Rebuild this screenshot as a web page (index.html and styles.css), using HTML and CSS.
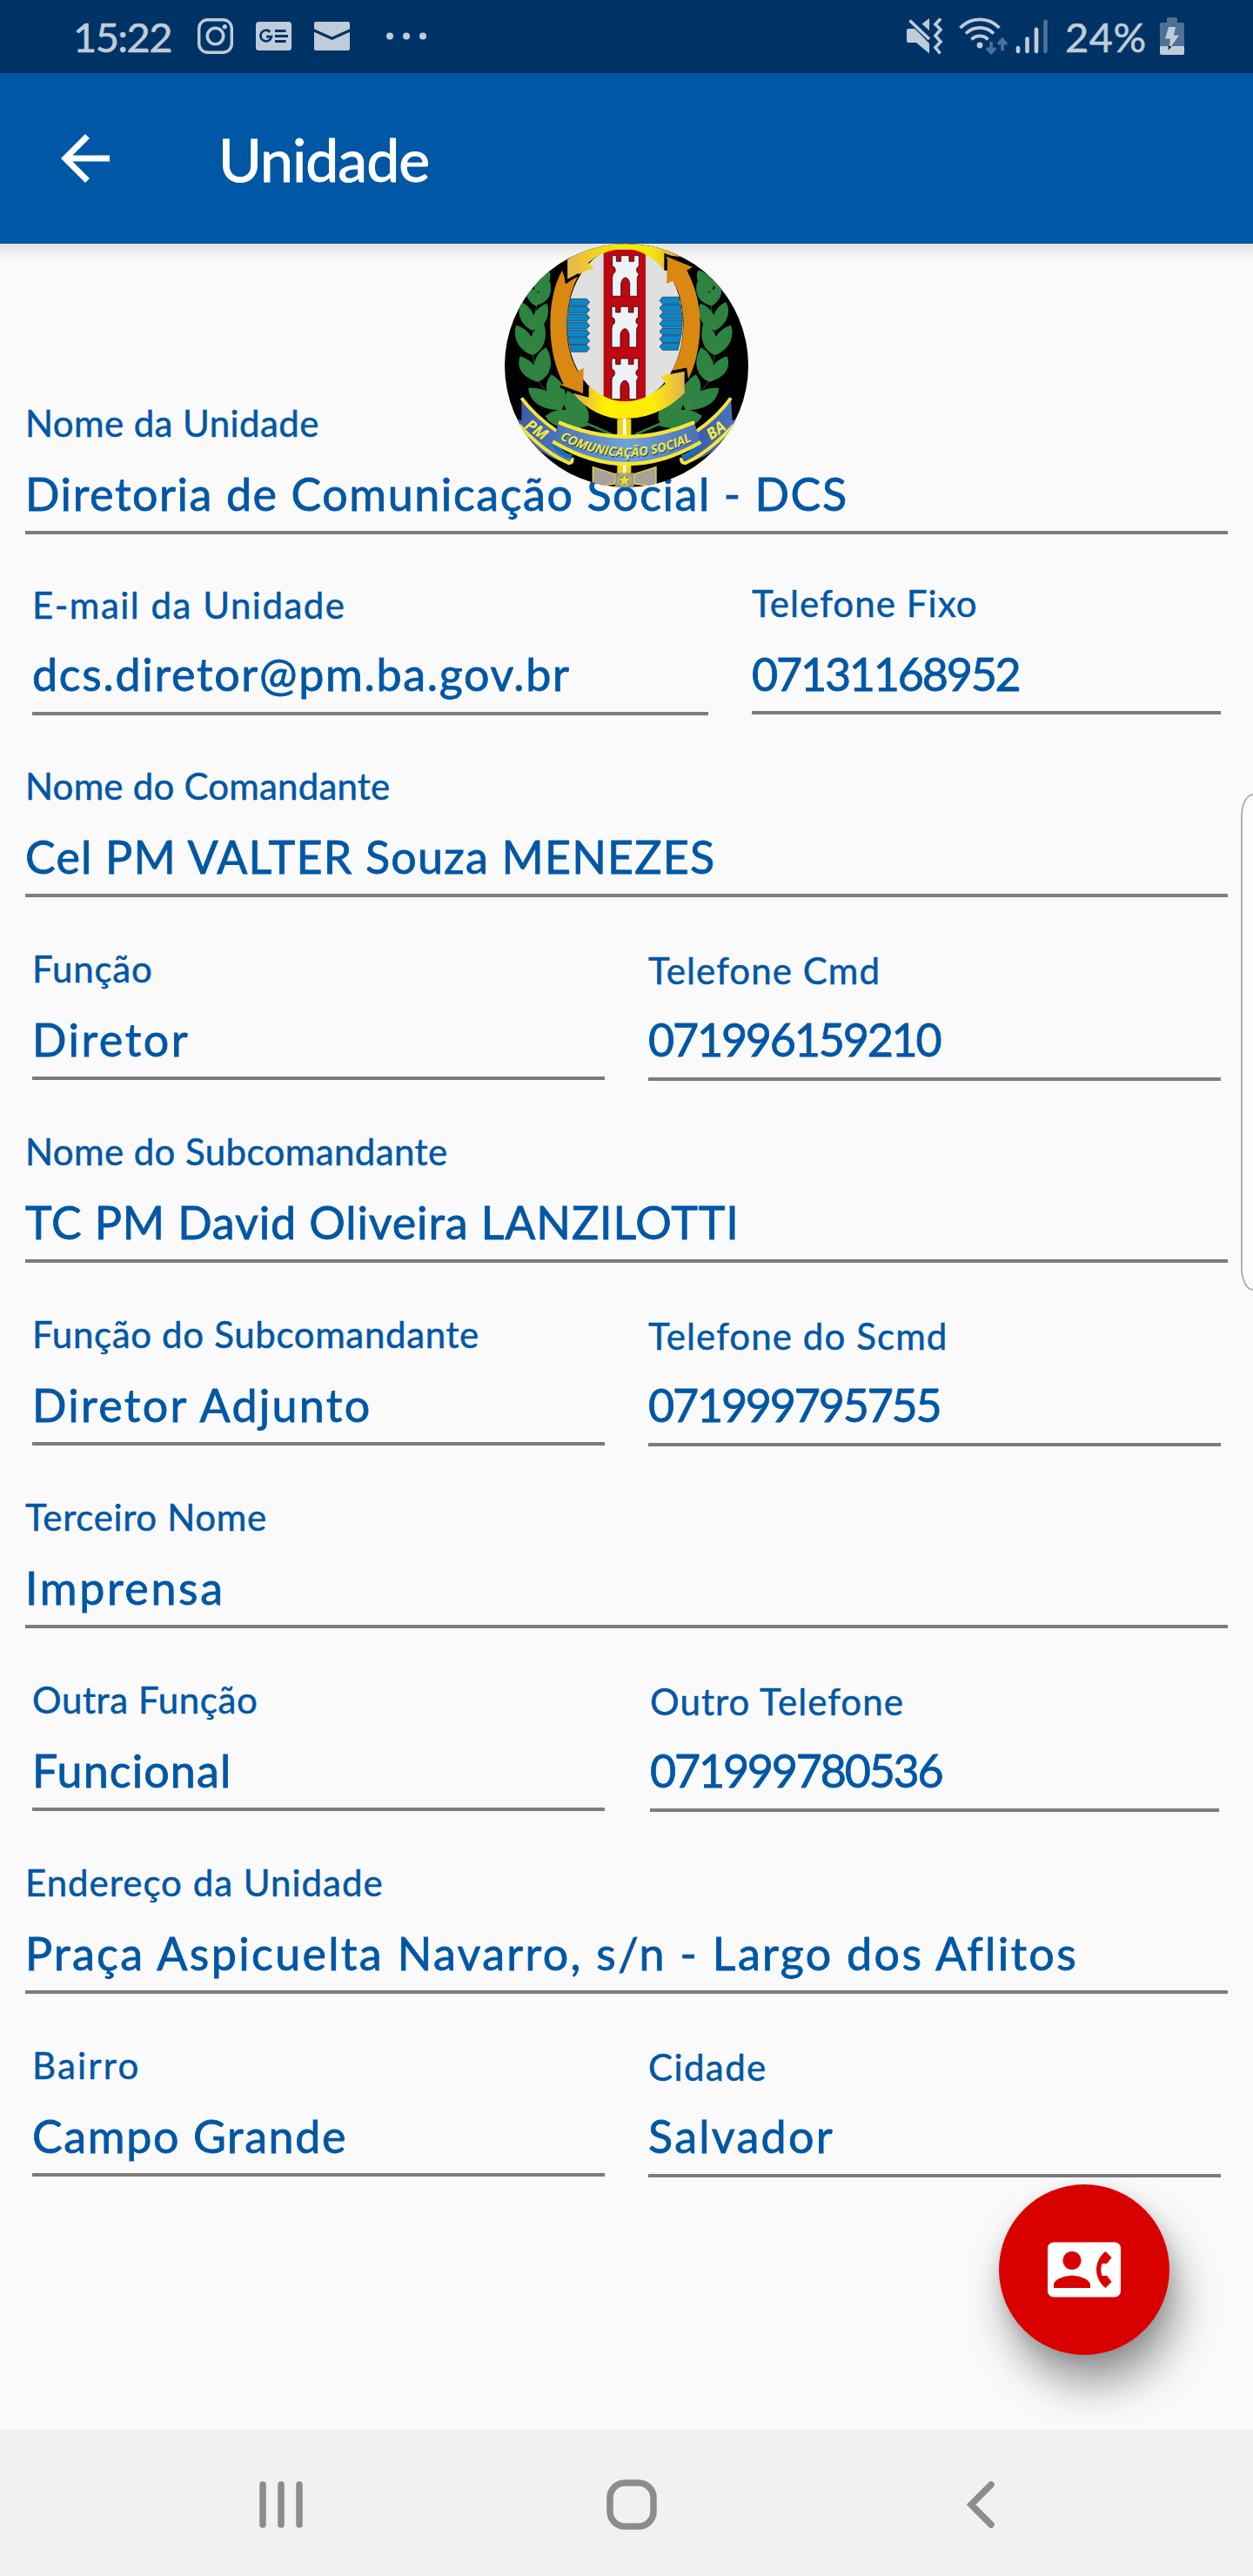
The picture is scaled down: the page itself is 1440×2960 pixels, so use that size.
FILE: index.html
```
<!DOCTYPE html>
<html lang="pt-BR">
<head>
<meta charset="utf-8">
<title>Unidade</title>
<link rel="stylesheet" href="styles.css">
</head>
<body>
<div class="screen">
  <header class="status">
    <span class="clock">15:22</span>
    <svg class="i-insta" width="41" height="41" viewBox="0 0 41 41" fill="none" stroke="#bfccd9"><rect x="1.7" y="1.7" width="37.6" height="37.6" rx="10" stroke-width="3.4"/><circle cx="20.5" cy="20.5" r="9.2" stroke-width="3.6"/><circle cx="31.3" cy="9.7" r="2.6" fill="#bfccd9" stroke="none"/></svg>
    <svg class="i-news" width="41" height="33" viewBox="0 0 41 33"><rect width="41" height="33" rx="3.5" fill="#bfccd9"/><path d="M16.3 11.7A6.3 6.3 0 1 0 17.9 17.2H12" fill="none" stroke="#003365" stroke-width="2.7"/><path d="M22 10.6H34.5M22 16.6H37M22 22.6H34.5" stroke="#003365" stroke-width="3"/></svg>
    <svg class="i-mail" width="41" height="33" viewBox="0 0 41 33"><rect width="41" height="33" rx="2" fill="#bfccd9"/><path d="M-1 9.5L20.5 19.2L42 9.5" fill="none" stroke="#003365" stroke-width="3.2"/></svg>
    <svg class="i-dots" width="48" height="9" viewBox="0 0 48 9" fill="#bfccd9"><circle cx="5" cy="4.5" r="4"/><circle cx="24" cy="4.5" r="4"/><circle cx="43" cy="4.5" r="4"/></svg>
    <span class="spacer"></span>
    <svg class="i-mute" width="43" height="44" viewBox="0 0 43 44"><path d="M3 13H10L14 16.5 27 30V41.5L12 29H3Q1 29 1 27V15Q1 13 3 13ZM27 1V15L18.5 7.5Z" fill="#bfccd9"/><path d="M4.500 3.500L27 25" stroke="#bfccd9" stroke-width="3.6"/><path d="M40 1.500L34 8 40 14 34 21 40 28 34 34.500 39.500 41.500" fill="none" stroke="#bfccd9" stroke-width="3.6"/></svg>
    <svg class="i-wifi" width="57" height="44" viewBox="0 0 57 44" fill="none" stroke="#bfccd9" stroke-width="3.8"><path d="M2.500 12A31 31 0 0 1 47.500 12M9 18.500A22.500 22.500 0 0 1 41 18.500M15.500 25.300A13.500 13.500 0 0 1 34.500 25.300"/><circle cx="25" cy="32" r="3.4" fill="#bfccd9" stroke="none"/><path d="M38 28V40M33 35L38 40.500 43 35M51 38V26M46 31L51 25.500 56 31" stroke="#4f7195" stroke-width="3.6"/></svg>
    <svg class="i-signal" width="38" height="40" viewBox="0 0 38 40" stroke="#bfccd9" stroke-width="4.6" stroke-linecap="round"><path d="M3 33V37M13.500 22.500V37M24 11.700V37"/><path d="M34.500 2.800V37" stroke="#4f7195"/></svg>
    <span class="percent">24%</span>
    <svg class="i-batt" width="28" height="43" viewBox="0 0 28 43"><path d="M8 6V1.500Q8 0 9.500 0H18.500Q20 0 20 1.500V6H26Q28 6 28 8V33H0V8Q0 6 2 6Z" fill="#4f7195"/><path d="M0 33H28V41Q28 43 26 43H2Q0 43 0 41Z" fill="#bfccd9"/><path d="M10 11H18L16 20.500H22L10.500 37 12 24.500H6Z" fill="#bfccd9"/><path d="M9.500 33H13.500L10 37.500Z" fill="#101c2a"/></svg>
  </header>

  <nav class="appbar">
    <svg width="84" height="84" viewBox="0 0 24 24" fill="#fff"><path d="M20,11H7.830l5.590,-5.590L12,4l-8,8 8,8 1.410,-1.410L7.830,13H20v-2z"/></svg>
    <h1>Unidade</h1>
  </nav>

  <main class="content">
    <svg class="crest" width="280" height="280" viewBox="60 30 840 840">
      <defs>
        <clipPath id="disc"><circle cx="480" cy="450" r="420"/></clipPath>
        <linearGradient id="top" x1="270" x2="660" y1="0" y2="0" gradientUnits="userSpaceOnUse"><stop offset="0" stop-color="#e8b456"/><stop offset=".45" stop-color="#f5e500"/><stop offset=".75" stop-color="#f6e60c"/><stop offset="1" stop-color="#e0a63c"/></linearGradient>
        <linearGradient id="bot" x1="310" x2="690" y1="0" y2="0" gradientUnits="userSpaceOnUse"><stop offset="0" stop-color="#e5b04c"/><stop offset=".25" stop-color="#fff000"/><stop offset=".7" stop-color="#fdeb0a"/><stop offset="1" stop-color="#dfac55"/></linearGradient>
        <linearGradient id="band" x1="0" x2="1"><stop offset="0" stop-color="#4a70b4"/><stop offset=".5" stop-color="#6fa3da"/><stop offset="1" stop-color="#4a70b4"/></linearGradient>
        <linearGradient id="tail" x1="0" x2="1"><stop offset="0" stop-color="#3a4fa0"/><stop offset="1" stop-color="#4e7fc4"/></linearGradient>
        <path id="motto" d="M250 704Q485 826 724 700"/>
        <g id="tower"><path d="M-46 -70H-32V-50H-16V-70H12V-50H29V-70H46V-34A15 15 0 0 0 46 -7L40 6V70H14V26Q10 6 0 6Q-12 6 -16 26V70H-46V6L-44 -6A15 15 0 0 0 -46 -34Z" fill="#eef2f6" stroke="#1a1012" stroke-width="2.500"/></g>
        <g id="plume">
          <path d="M210 125C165 145 145 175 155 190C190 195 214 175 214 135ZM165 240C128 215 130 180 150 160C172 180 178 215 165 240ZM168 240C172 200 195 175 214 165C222 205 205 230 168 240ZM152 325C112 300 106 265 118 235C155 255 168 290 152 325ZM158 325C150 280 175 250 204 240C214 285 195 315 158 325ZM152 410C100 385 94 345 102 315C145 330 168 370 152 410ZM158 410C140 365 160 325 193 310C206 355 190 395 158 410ZM170 502C120 485 106 455 115 422C160 440 180 470 170 502ZM176 502C150 455 170 410 202 392C228 440 215 485 176 502ZM248 600C185 600 150 570 145 530C200 530 240 555 248 600ZM254 600C205 565 195 520 222 485C265 510 280 560 254 600ZM345 655C280 675 220 655 204 625C250 590 310 605 345 655ZM338 645C275 630 255 585 278 540C330 575 355 605 345 640Z" fill="#2c8440" stroke="#2c8440" stroke-width="7" stroke-linejoin="round"/>
          <path d="M185 150L170 240 158 325 156 410 174 502 250 600 340 650M185 210L168 240 145 200M185 280L156 325 130 275M180 350L156 410 125 355M195 440L174 502 135 455M235 530L250 600 180 555M290 580L340 650 240 630" fill="none" stroke="#597f52" stroke-width="2"/><path d="M320 640L430 688" fill="none" stroke="#2c8440" stroke-width="8"/>
        </g>
        <g id="wave"><path d="M285 220H343L353 232 343 244H284ZM280 246H343L353 258 343 270H278ZM275 273H343L353 285 343 297H274ZM274 300H343L353 312 343 324H275ZM275 327H343L353 339 343 351H278ZM279 353H343L353 365 343 377H283ZM284 379H343L353 391 343 403H290Z" fill="#0b86c7" stroke="#26323a" stroke-width="2"/></g>
      </defs>
      <g clip-path="url(#disc)">
        <rect x="60" y="30" width="840" height="840" fill="#000"/>
        <use href="#plume"/><use href="#plume" transform="matrix(-1 0 0 1 940 0)"/>
        <ellipse cx="475" cy="310" rx="200" ry="270" fill="#e0e0e1"/>
        <path d="M402 50H545V575H402Z" fill="#c00611"/><path d="M402 50V575M545 50V575" stroke="#7d1118" stroke-width="2"/>
        <use href="#tower" x="477" y="141"/><use href="#tower" x="475" y="317"/><use href="#tower" x="475" y="496"/>
        <use href="#wave"/><use href="#wave" transform="matrix(-1 0 0 1 947 -6)"/>
        <path d="M276 85Q360 30 470 30Q590 30 668 76L622 70 612 122Q545 48 475 48Q405 48 348 96L368 116Q340 120 316 136L276 156Z" fill="url(#top)"/>
        <path d="M258 122Q215 200 217 320Q220 430 262 512L252 522 330 548 332 458 312 470Q270 400 274 290Q280 200 318 132L274 168Z" fill="#d98812"/>
        <path d="M272 88V160L316 136M252 522L348 558V520" fill="none" stroke="#000" stroke-width="9"/>
        <path d="M622 72L712 108 688 122Q735 210 734 315Q730 430 690 502L684 462 636 470Q680 390 676 290Q672 210 640 158L618 168Z" fill="#d98812"/>
        <path d="M614 122V68L712 108M636 472L684 462 690 505" fill="none" stroke="#000" stroke-width="8"/>
        <path d="M350 520Q410 574 474 574Q550 574 614 512L598 486 680 470V545Q590 634 472 634Q370 634 295 545L350 560Z" fill="url(#bot)"/>
        <path d="M448 634H496V840H448Z" fill="#ecd51c"/><path d="M473 634V840" stroke="#fff" stroke-width="10"/>
        <path d="M118 562Q165 625 240 676L230 716 292 768Q300 788 280 788Q150 755 60 620L118 640Z" fill="url(#tail)"/>
        <path d="M118 562Q165 625 240 676M110 655Q190 745 280 786Q296 788 292 768" fill="none" stroke="#f5e636" stroke-width="12"/>
        <path d="M840 562Q795 625 722 676L730 716 670 768Q664 788 684 788Q810 755 900 620L845 640Z" fill="url(#tail)"/>
        <path d="M840 562Q795 625 722 676M850 655Q770 745 684 786Q666 788 670 768" fill="none" stroke="#f5e636" stroke-width="12"/>
        <path d="M228 720Q250 755 292 765M732 720Q710 755 670 765" fill="none" stroke="#1471b5" stroke-width="15"/>
        <path d="M246 646Q480 745 714 646L736 718Q480 860 226 712Z" fill="url(#band)"/>
        <path d="M246 646Q480 745 714 646M226 712Q480 866 736 714" fill="none" stroke="#f5e636" stroke-width="13"/>
        <text class="motto motto-shade" transform="translate(3 4)"><textPath href="#motto" textLength="474" lengthAdjust="spacingAndGlyphs">COMUNICAÇÃO SOCIAL</textPath></text>
        <text class="motto"><textPath href="#motto" textLength="474" lengthAdjust="spacingAndGlyphs">COMUNICAÇÃO SOCIAL</textPath></text>
        <text class="motto ends" transform="translate(126 664) rotate(34)">PM</text>
        <text class="motto ends" transform="translate(772 708) rotate(-36)">BA</text>
        <path d="M364 800L440 824V858L364 868ZM582 800L506 824V858L582 868Z" fill="#aaa19a" stroke="#ecdc30" stroke-width="4"/><rect x="441" y="820" width="64" height="52" fill="#9b968c"/><circle cx="473" cy="845" r="22" fill="none" stroke="#e9da2c" stroke-width="2.500"/><path d="M473 826L478 840 492 840 481 849 485 863 473 855 461 863 465 849 454 840 468 840Z" fill="#f2e229"/>
      </g>
    </svg>

    <section class="row first">
      <div class="field unit"><label>Nome da Unidade</label><p>Diretoria de Comunicação Social - DCS</p></div>
    </section>
    <section class="row pair contact">
      <div class="field low mail"><label>E-mail da Unidade</label><p>dcs.diretor@pm.ba.gov.br</p></div>
      <div class="field phone landline"><label>Telefone Fixo</label><p>07131168952</p></div>
    </section>
    <section class="row">
      <div class="field cmd"><label>Nome do Comandante</label><p>Cel PM VALTER Souza MENEZES</p></div>
    </section>
    <section class="row pair">
      <div class="field role"><label>Função</label><p>Diretor</p></div>
      <div class="field low phone"><label>Telefone Cmd</label><p>071996159210</p></div>
    </section>
    <section class="row">
      <div class="field subcmd"><label>Nome do Subcomandante</label><p>TC PM David Oliveira LANZILOTTI</p></div>
    </section>
    <section class="row pair">
      <div class="field subrole"><label>Função do Subcomandante</label><p>Diretor Adjunto</p></div>
      <div class="field low phone"><label>Telefone do Scmd</label><p>071999795755</p></div>
    </section>
    <section class="row">
      <div class="field third"><label>Terceiro Nome</label><p>Imprensa</p></div>
    </section>
    <section class="row pair">
      <div class="field other"><label>Outra Função</label><p>Funcional</p></div>
      <div class="field low phone inset"><label>Outro Telefone</label><p>071999780536</p></div>
    </section>
    <section class="row">
      <div class="field address"><label>Endereço da Unidade</label><p>Praça Aspicuelta Navarro, s/n - Largo dos Aflitos</p></div>
    </section>
    <section class="row pair">
      <div class="field district"><label>Bairro</label><p>Campo Grande</p></div>
      <div class="field low city"><label>Cidade</label><p>Salvador</p></div>
    </section>

    <div class="edge-handle"></div>
    <button class="fab" aria-label="Contato">
      <svg width="84" height="84" viewBox="0 0 24 24" fill="#fff"><path d="M22,3H2C0.900,3 0,3.900 0,5v14c0,1.100 0.900,2 2,2h20c1.100,0 1.990,-0.900 1.990,-2L24,5c0,-1.100 -0.900,-2 -2,-2zM8,6c1.660,0 3,1.340 3,3s-1.340,3 -3,3 -3,-1.340 -3,-3 1.340,-3 3,-3zM14,18L2,18v-1c0,-2 4,-3.100 6,-3.100s6,1.100 6,3.100v1zM17.850,14h1.640L21,16l-1.990,1.990c-1.310,-0.980 -2.280,-2.380 -2.730,-3.990 -0.180,-0.640 -0.280,-1.310 -0.280,-2s0.100,-1.360 0.280,-2c0.450,-1.620 1.420,-3.010 2.730,-3.990L21,8l-1.510,2h-1.640c-0.220,0.630 -0.350,1.300 -0.350,2s0.130,1.370 0.350,2z"/></svg>
    </button>
  </main>

  <footer class="navbar">
    <svg width="50" height="54" viewBox="0 0 50 54" stroke="#8c8c8c" stroke-width="7.500" stroke-linecap="round"><path d="M4 4V50M25 4V50M46 4V50"/></svg>
    <svg class="home" width="58" height="58" viewBox="0 0 58 58" fill="none" stroke="#8c8c8c" stroke-width="7.500"><rect x="4" y="4" width="50" height="50" rx="17"/></svg>
    <svg width="32" height="54" viewBox="0 0 32 54" fill="none" stroke="#8c8c8c" stroke-width="7.500" stroke-linecap="round"><path d="M28 4L5 27 28 50"/></svg>
  </footer>
</div>
</body>
</html>
```
FILE: styles.css
```
* { box-sizing: border-box; margin: 0; padding: 0; }
body { background: #fafafa; font-family: Lato, "Open Sans", sans-serif; color: #0057a5; }
svg { display: block; flex: none; }
.screen { width: 1440px; height: 2960px; display: flex; flex-direction: column; overflow: hidden; }

/* Status bar */
.status { height: 84px; background: #003365; color: #bfccd9; display: flex; align-items: center; padding: 0 79px 1px 84px; font-size: 47px; line-height: 84px; }
.clock { width: 143px; letter-spacing: -1.6px; -webkit-text-stroke: 0.6px; }
.percent { margin-left: 19px; width: 109px; letter-spacing: 0.5px; -webkit-text-stroke: 0.6px; }
.i-news { margin-left: 26px; }
.i-mail { margin-left: 26px; }
.i-dots { margin-left: 41px; }
.spacer { flex: 1; }
.i-wifi { margin-left: 17px; }
.i-signal { margin-left: 9px; }

/* App bar */
.appbar { height: 196px; background: #0057a5; color: #fff; display: flex; align-items: center; padding-left: 56px; gap: 111px; position: relative; flex: none; }
.appbar h1 { font-size: 68px; font-weight: 400; letter-spacing: -1px; line-height: 84px; padding-top: 1px; -webkit-text-stroke: 1px; }

/* Form */
.content { flex: 1; position: relative; padding: 0 29px; background: linear-gradient(#e2e2e2, #fafafa 20px) top / 100% 20px no-repeat #fafafa; }
.crest { position: absolute; left: 580px; top: 0; z-index: 2; }
.row { height: 210px; display: grid; align-items: end; }
.row.first { height: 334px; }
.pair { grid-template-columns: 1fr 1fr; gap: 50px; padding: 0 8px; }
.contact { height: 207px; grid-template-columns: 777px 1fr; }
.field { display: flex; flex-direction: column; white-space: nowrap; border-bottom: 4px solid #7c7c7c; }
.field.low { margin-bottom: -1px; }
.field.inset { margin: 0 2px -1px; }
.field label { font-size: 42px; line-height: 50px; margin: 0 0 24px; letter-spacing: var(--label-track, 0.8px); -webkit-text-stroke: 0.5px; }
.field.low label { margin-bottom: 22px; }
.field p { font-size: 52px; line-height: 64px; margin: 0 0 11px; letter-spacing: var(--value-track, 2px); -webkit-text-stroke: 0.8px; }
.field.low p { margin-bottom: 12px; }
.unit { --label-track: 0.4px; --value-track: 1.57px; }
.mail { --label-track: 1.5px; --value-track: 1.69px; }
.phone { --label-track: 1.1px; --value-track: -2.2px; }
.cmd { --label-track: 0.2px; --value-track: 1.2px; }
.role { --value-track: 2.5px; }
.subcmd { --label-track: 0.4px; --value-track: 0.87px; }
.subrole { --label-track: 0.65px; --value-track: 2.3px; }
.third { --label-track: 0.67px; --value-track: 2.6px; }
.other { --label-track: 0.61px; --value-track: 1.1px; }
.address { --label-track: 1px; --value-track: 2.33px; }
.district { --label-track: 2.2px; --value-track: 1.6px; }
.city { --label-track: 1.4px; --value-track: 2.3px; }

.motto { font: italic 700 43px "Open Sans", sans-serif; fill: #f8ea3a; }
.motto-shade { fill: #234f7c; }
.motto.ends { font-size: 54px; }

.edge-handle { position: absolute; right: -4px; top: 632px; width: 18px; height: 571px; border: 2px solid #b0b0b0; border-right: 0; border-radius: 14px 0 0 14px / 26px 0 0 26px; background: #fcfcfc; }
.fab { position: absolute; left: 1148px; top: 2230px; width: 196px; height: 196px; border: 0; border-radius: 50%; background: #d90000; display: flex; align-items: center; justify-content: center; box-shadow: 10px 34px 48px rgba(0, 0, 0, .38), 2px 6px 20px rgba(0, 0, 0, .12); }

/* System navigation */
.navbar { height: 168px; background: #f1f1f1; display: flex; align-items: center; justify-content: space-between; padding: 3px 297px 0 298px; position: relative; flex: none; }
.home { margin-right: 8px; }
```
